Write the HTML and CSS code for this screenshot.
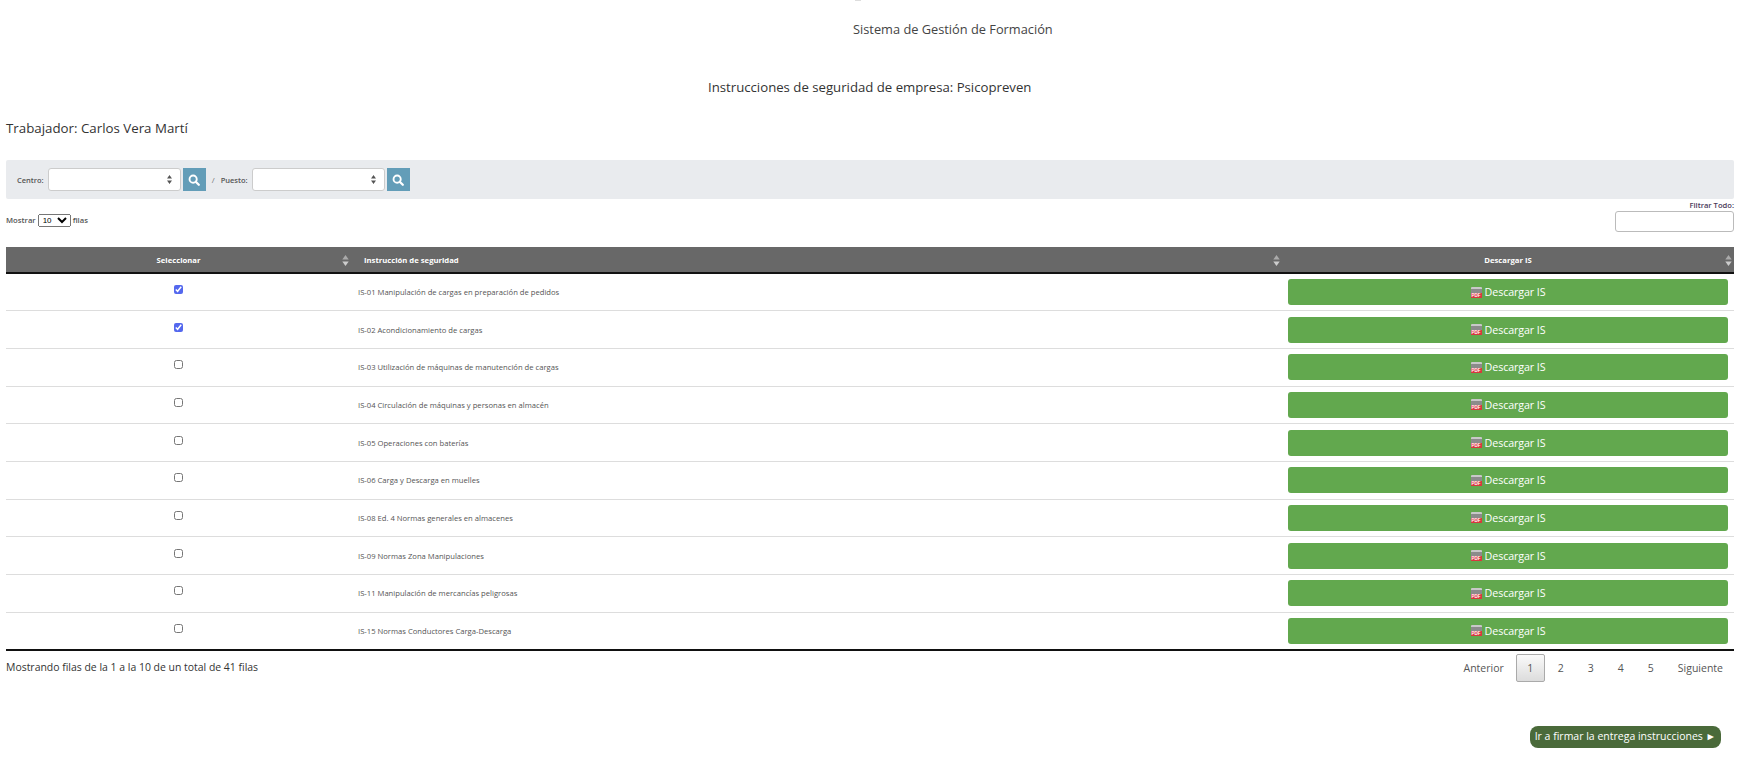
FILE: index.html
```html
<!DOCTYPE html>
<html lang="es">
<head>
    <meta charset="UTF-8">
    <meta name="viewport" content="width=device-width, initial-scale=1.0">
    <title>Sistema de Gestión de Formación</title>
    <link rel="stylesheet" href="styles.css">
</head>
<body>
    <svg class="icon-defs" width="0" height="0">
        <symbol id="icon-search" viewBox="0 0 14 14">
            <circle cx="6" cy="6" r="4.2" fill="none" stroke="#fff" stroke-width="2.2"/>
            <path d="M9 9l3.6 3.6" stroke="#fff" stroke-width="2.6" stroke-linecap="round"/>
        </symbol>
        <symbol id="icon-sort" viewBox="0 0 7 12">
            <path d="M3.5 0L7 5H0z" fill="#aaa"/>
            <path d="M3.5 12L0 7h7z" fill="#ccc"/>
        </symbol>
    </svg>

    <header class="page-head">
        <div class="logo-tip"></div>
        <h1 class="system-title">Sistema de Gestión de Formación</h1>
        <h2 class="company-title">Instrucciones de seguridad de empresa: Psicopreven</h2>
        <h3 class="worker-title">Trabajador: Carlos Vera Martí</h3>
    </header>

    <div class="filter-bar">
        <label class="filter-label">Centro:</label>
        <select class="filter-select"><option></option></select>
        <button class="search-btn"><svg class="search-icon"><use href="#icon-search"/></svg></button>
        <span class="filter-sep">/</span>
        <label class="filter-label">Puesto:</label>
        <select class="filter-select"><option></option></select>
        <button class="search-btn"><svg class="search-icon"><use href="#icon-search"/></svg></button>
    </div>

    <div class="table-tools">
        <div class="page-length">
            Mostrar
            <select class="length-select"><option>10</option></select>
            filas
        </div>
        <div class="table-filter">
            <label class="table-filter-label">Filtrar Todo:</label>
            <input type="text" class="table-filter-input">
        </div>
    </div>

    <table class="is-table">
        <colgroup>
            <col class="col-select">
            <col class="col-name">
            <col class="col-download">
        </colgroup>
        <thead>
            <tr>
                <th class="center">Seleccionar<svg class="sort-icon"><use href="#icon-sort"/></svg></th>
                <th class="th-name">Instrucción de seguridad<svg class="sort-icon"><use href="#icon-sort"/></svg></th>
                <th class="center">Descargar IS<svg class="sort-icon"><use href="#icon-sort"/></svg></th>
            </tr>
        </thead>
        <tbody>
            <tr>
                <td class="center"><input type="checkbox" checked></td>
                <td class="td-name">IS-01 Manipulación de cargas en preparación de pedidos</td>
                <td><a class="download-btn"><span class="pdf-icon"><span class="pdf-label">PDF</span></span>Descargar IS</a></td>
            </tr>
            <tr>
                <td class="center"><input type="checkbox" checked></td>
                <td class="td-name">IS-02 Acondicionamiento de cargas</td>
                <td><a class="download-btn"><span class="pdf-icon"><span class="pdf-label">PDF</span></span>Descargar IS</a></td>
            </tr>
            <tr>
                <td class="center"><input type="checkbox"></td>
                <td class="td-name">IS-03 Utilización de máquinas de manutención de cargas</td>
                <td><a class="download-btn"><span class="pdf-icon"><span class="pdf-label">PDF</span></span>Descargar IS</a></td>
            </tr>
            <tr>
                <td class="center"><input type="checkbox"></td>
                <td class="td-name">IS-04 Circulación de máquinas y personas en almacén</td>
                <td><a class="download-btn"><span class="pdf-icon"><span class="pdf-label">PDF</span></span>Descargar IS</a></td>
            </tr>
            <tr>
                <td class="center"><input type="checkbox"></td>
                <td class="td-name">IS-05 Operaciones con baterías</td>
                <td><a class="download-btn"><span class="pdf-icon"><span class="pdf-label">PDF</span></span>Descargar IS</a></td>
            </tr>
            <tr>
                <td class="center"><input type="checkbox"></td>
                <td class="td-name">IS-06 Carga y Descarga en muelles</td>
                <td><a class="download-btn"><span class="pdf-icon"><span class="pdf-label">PDF</span></span>Descargar IS</a></td>
            </tr>
            <tr>
                <td class="center"><input type="checkbox"></td>
                <td class="td-name">IS-08 Ed. 4 Normas generales en almacenes</td>
                <td><a class="download-btn"><span class="pdf-icon"><span class="pdf-label">PDF</span></span>Descargar IS</a></td>
            </tr>
            <tr>
                <td class="center"><input type="checkbox"></td>
                <td class="td-name">IS-09 Normas Zona Manipulaciones</td>
                <td><a class="download-btn"><span class="pdf-icon"><span class="pdf-label">PDF</span></span>Descargar IS</a></td>
            </tr>
            <tr>
                <td class="center"><input type="checkbox"></td>
                <td class="td-name">IS-11 Manipulación de mercancías peligrosas</td>
                <td><a class="download-btn"><span class="pdf-icon"><span class="pdf-label">PDF</span></span>Descargar IS</a></td>
            </tr>
            <tr>
                <td class="center"><input type="checkbox"></td>
                <td class="td-name">IS-15 Normas Conductores Carga-Descarga</td>
                <td><a class="download-btn"><span class="pdf-icon"><span class="pdf-label">PDF</span></span>Descargar IS</a></td>
            </tr>
        </tbody>
    </table>

    <div class="table-foot">
        <div class="table-info">Mostrando filas de la 1 a la 10 de un total de 41 filas</div>
        <div class="pager">
            <a class="pager-item pager-text">Anterior</a>
            <a class="pager-item pager-current">1</a>
            <a class="pager-item">2</a>
            <a class="pager-item">3</a>
            <a class="pager-item">4</a>
            <a class="pager-item">5</a>
            <a class="pager-item pager-text pager-next">Siguiente</a>
        </div>
    </div>

    <div class="sign-row">
        <a class="sign-btn">Ir a firmar la entrega instrucciones ►</a>
    </div>
</body>
</html>
```

FILE: styles.css
```css
body {
    margin: 0;
    padding: 0 20px 0 6px;
    font-family: "Open Sans", "Noto Sans", sans-serif;
    color: #333;
    background: #fff;
    height: 773px;
    box-sizing: border-box;
    overflow: hidden;
}
.icon-defs {
    display: block;
    height: 0;
}
.page-head {
    height: 160px;
}
.logo-tip {
    width: 6px;
    height: 1px;
    margin-left: 849px;
    background: #ddd;
}
.system-title,
.company-title,
.worker-title {
    margin: 0;
    font-weight: 400;
    font-size: 12.800px;
    line-height: 18px;
}
.system-title {
    padding-top: 19px;
    padding-left: 847px;
    color: #444;
}
.company-title {
    padding-top: 40px;
    padding-left: 702px;
    font-size: 13.200px;
}
.worker-title {
    padding-top: 23px;
    font-size: 13.300px;
}
.filter-bar {
    display: flex;
    align-items: center;
    height: 39px;
    padding-left: 11px;
    background: #e9ebee;
    border-radius: 2px;
}
.filter-label {
    font-size: 7.500px;
    font-weight: 600;
    color: #555;
    margin-right: 4px;
}
.filter-select {
    width: 133px;
    height: 23px;
    appearance: none;
    background: #fff url("data:image/svg+xml,%3Csvg xmlns='http://www.w3.org/2000/svg' width='5' height='9'%3E%3Cpath d='M2.5 0L5 3.5H0zM2.5 9L0 5.500h5z' fill='%23555'/%3E%3C/svg%3E") no-repeat right 8px center;
    border: 1px solid #ccc;
    border-radius: 3px;
}
.search-btn {
    display: flex;
    align-items: center;
    justify-content: center;
    width: 23px;
    height: 23px;
    margin-left: 2px;
    padding: 0;
    border: 0;
    background: #639db8;
}
.search-icon {
    width: 12px;
    height: 12px;
}
.filter-sep {
    font-size: 8px;
    color: #777;
    margin: 0 6px 0 6px;
}
.table-tools {
    display: flex;
    justify-content: space-between;
    height: 48px;
}
.page-length {
    padding-top: 15px;
    font-size: 7.700px;
    font-weight: 600;
    color: #555;
}
.length-select {
    width: 33px;
    height: 13px;
    font-size: 8px;
    padding: 0;
}
.table-filter {
    display: flex;
    flex-direction: column;
    align-items: flex-end;
}
.table-filter-label {
    font-size: 7.600px;
    font-weight: 600;
    line-height: 12px;
    color: #4a3a5a;
}
.table-filter-input {
    width: 119px;
    height: 21px;
    box-sizing: border-box;
    border: 1px solid #bbb;
    border-radius: 3px;
}
.is-table {
    width: 1728px;
    table-layout: fixed;
    border-collapse: collapse;
    border-bottom: 2px solid #111;
}
.col-select {
    width: 345px;
}
.col-download {
    width: 452px;
}
.is-table th {
    position: relative;
    height: 25px;
    padding: 0 10px;
    background: #686868;
    color: #fff;
    font-size: 7.700px;
    font-weight: 700;
    text-align: left;
    border-bottom: 2px solid #111;
}
.is-table th.center,
.is-table td.center {
    text-align: center;
}
.is-table th.th-name {
    padding-left: 13px;
}
.sort-icon {
    position: absolute;
    right: 2px;
    top: 8px;
    width: 7px;
    height: 11px;
}
.is-table td {
    height: 37.700px;
    box-sizing: border-box;
    padding: 0 6px;
    font-size: 7.650px;
    color: #555;
    border-bottom: 1px solid #ddd;
}
.is-table td.td-name {
    padding-left: 7px;
}
.is-table tr:last-child td {
    border-bottom: 0;
}
.is-table input[type="checkbox"] {
    width: 9px;
    height: 9px;
    margin: 0 0 5px;
    accent-color: #5468ee;
}
.download-btn {
    display: flex;
    align-items: center;
    justify-content: center;
    height: 26px;
    background: #62a84e;
    border-radius: 3px;
    color: #fff;
    font-size: 10.700px;
    letter-spacing: -0.100px;
}
.pdf-icon {
    display: flex;
    flex-direction: column;
    justify-content: flex-end;
    box-sizing: border-box;
    width: 11px;
    height: 11px;
    margin-right: 3px;
    padding-top: 1px;
    background: #8b8b8b;
    border-top: 2px solid #c8c8c8;
    border-radius: 1px;
}
.pdf-label {
    display: block;
    height: 5px;
    background: #d8383f;
    font-family: "Liberation Sans", sans-serif;
    font-size: 4.500px;
    font-weight: 700;
    line-height: 5px;
    letter-spacing: 0;
    text-align: center;
}
.table-foot {
    display: flex;
    justify-content: space-between;
    width: 1728px;
}
.table-info {
    padding-top: 9px;
    font-size: 10.450px;
}
.pager {
    display: flex;
    align-items: center;
    padding-top: 3px;
    padding-right: 5px;
    font-size: 10.500px;
    color: #555;
}
.pager-item {
    width: 30px;
    height: 28px;
    line-height: 28px;
    text-align: center;
}
.pager-text {
    width: auto;
    padding: 0 6px;
}
.pager-next {
    margin-left: 6px;
}
.pager-current {
    box-sizing: border-box;
    width: 29px;
    margin: 0 1px 0 6px;
    line-height: 26px;
    border: 1px solid #aaa;
    border-radius: 2px;
    background: linear-gradient(#fafafa, #dcdcdc);
}
.sign-row {
    display: flex;
    justify-content: flex-end;
    width: 1715px;
    padding-top: 44px;
}
.sign-btn {
    padding: 0 5px;
    height: 22px;
    line-height: 21px;
    background: #4a6a3a;
    border-radius: 8px;
    color: #fff;
    font-size: 10.500px;
}
```
